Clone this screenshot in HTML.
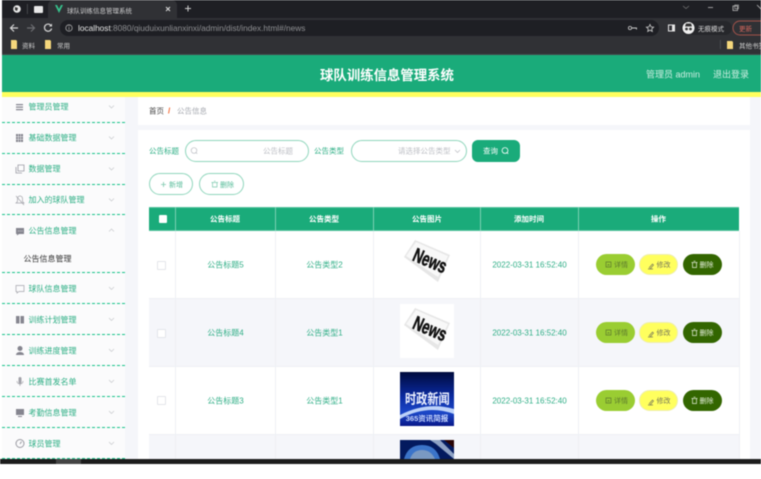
<!DOCTYPE html>
<html lang="zh"><head><meta charset="utf-8"><title>球队训练信息管理系统</title>
<style>
*{box-sizing:border-box;margin:0;padding:0}
html,body{width:761px;height:479px;overflow:hidden;background:#fff}
body{font-family:"Liberation Sans","Noto Sans CJK SC",sans-serif;position:relative}
#w{position:absolute;left:0;top:0;width:761px;height:479px;overflow:hidden;filter:blur(.45px)}
.a{position:absolute;white-space:nowrap}
.c{position:absolute;white-space:nowrap;text-align:center;transform:translate(-50%,-50%)}
.l{position:absolute;white-space:nowrap;transform:translateY(-50%)}
.m{font-size:8px;color:#2cae84;left:28.5px}
.dash{position:absolute;left:2px;width:123px;height:0;border-top:1px dashed #17c28a}
.th{font-size:7.5px;color:#fff;font-weight:bold}
.td{font-size:8px;color:#2fae86}
.b{position:absolute;height:21px;width:39px;border-radius:11px;font-size:7px;text-align:center;line-height:23px}
.g{background:#9acd32;color:#5d7a2d}.y{background:#ffff5e;color:#77775a;border:1px solid #eeeeb0;line-height:22px}.d{background:#336600;color:#e6efdc}
.v{position:absolute;background:#eef0f4;width:1px}
.box{position:absolute;left:157px;width:9px;height:9px;border:1px solid #e3e5ea;background:#fff;border-radius:1px}
</style></head><body><div id="w">
<!-- browser chrome -->
<div class="a" style="left:2px;top:0;width:759px;height:18px;background:#1e1f24"></div>
<div class="a" style="left:48px;top:0;width:129px;height:18px;background:#303135;border-radius:5px 5px 0 0"></div>
<div class="a" style="left:2px;top:18px;width:759px;height:37px;background:#303135"></div>
<div class="a" style="left:2px;top:54px;width:759px;height:1px;background:#46474b"></div>
<div class="a" style="left:60px;top:19.5px;height:16px;background:#1e1f24;border-radius:8px;width:599px"></div>
<svg class="a" style="left:0;top:0" width="761" height="55" viewBox="0 0 761 55">
<circle cx="17" cy="9" r="3.8" fill="#e8e8e8"/><path d="M15 7l3 1-1 3-2-1z" fill="#333"/>
<rect x="27" y="4" width=".7" height="10" fill="#55565a"/>
<rect x="34" y="6" width="9" height="7" rx="1" fill="#e8e8e8"/>
<path d="M55 5l4 8 4-8h-2l-2 4-2-4z" fill="#37c18c"/>
<path d="M166 7l4 4M170 7l-4 4" stroke="#ddd" stroke-width="1"/>
<path d="M188 5.500v6M185 8.500h6" stroke="#ccc" stroke-width="1"/>
<path d="M18 28h-7M14 24.500l-3.500 3.500 3.500 3.500" stroke="#d5d5d5" stroke-width="1.200" fill="none"/>
<path d="M27 28h7M31 24.500l3.500 3.500-3.500 3.500" stroke="#6d6e72" stroke-width="1.200" fill="none"/>
<path d="M51 25.500a3.600 3.600 0 1 0 .6 3" stroke="#d5d5d5" stroke-width="1.200" fill="none"/><path d="M52 23.500v3h-3z" fill="#d5d5d5"/>
<circle cx="69" cy="28" r="3.200" stroke="#aaa" stroke-width=".8" fill="none"/><path d="M69 27v3M69 25.800v.6" stroke="#aaa" stroke-width=".7"/>
<path d="M11 40h5l1 1v8h-6z" fill="#f5d77c"/><path d="M45 40h5l1 1v8h-6z" fill="#f5d77c"/><path d="M727 41h5l1 1v7h-6z" fill="#f5d77c"/>
<rect x="720" y="40" width=".7" height="9" fill="#55565a"/>
<circle cx="630" cy="28" r="1.600" stroke="#ccc" fill="none" stroke-width=".8"/><path d="M632 28h4.500v1.500" stroke="#ccc" stroke-width=".9" fill="none"/>
<path d="M650 24.500l1.100 2.400 2.500.3-1.900 1.700.6 2.500-2.300-1.300-2.300 1.300.6-2.500-1.900-1.700 2.500-.3z" stroke="#ccc" stroke-width=".8" fill="none"/>
<rect x="668" y="24.500" width="7" height="7" fill="#e5e5e5"/><rect x="669" y="25.500" width="3" height="5" fill="#303135"/>
<path d="M683 6l3 2.500 3-2.500" stroke="#777" stroke-width=".7" fill="none"/>
<path d="M708 7.500h5" stroke="#bbb" stroke-width=".8"/>
<rect x="733" y="6" width="4.500" height="4.500" stroke="#bbb" stroke-width=".8" fill="none"/><rect x="734.800" y="5" width="3.700" height="3.700" stroke="#bbb" stroke-width=".6" fill="none"/>
<path d="M757 5l4 4" stroke="#bbb" stroke-width=".8"/>
<rect x="681" y="21" width="51" height="14" rx="7" fill="#26272b"/>
<circle cx="688.500" cy="28" r="6" fill="#f0f0f0"/><circle cx="686.500" cy="29" r="1.400" fill="#333"/><circle cx="690.500" cy="29" r="1.400" fill="#333"/><path d="M685 26.500h7l-1-3h-5z" fill="#333"/>
<rect x="733" y="21" width="40" height="14" rx="7" fill="none" stroke="#a3524a"/>
</svg>
<div class="l" style="left:67px;top:9.500px;font-size:6.500px;color:#cfcfd0">球队训练信息管理系统</div>
<div class="l" style="left:78px;top:28px;font-size:8.300px;color:#8e8f92"><span style="color:#e6e6e6">localhost</span>:8080/qiuduixunlianxinxi/admin/dist/index.html#/news</div>
<div class="l" style="left:22px;top:45px;font-size:6.500px;color:#cfcfcf">资料</div>
<div class="l" style="left:57px;top:45px;font-size:6.500px;color:#cfcfcf">常用</div>
<div class="l" style="left:698px;top:28px;font-size:6.500px;color:#d8d8d8">无痕模式</div>
<div class="l" style="left:739px;top:28px;font-size:6.500px;color:#d9695e">更新</div>
<div class="l" style="left:739px;top:45px;font-size:6.500px;color:#cfcfcf">其他书签</div>

<!-- header -->
<div class="a" style="left:2px;top:55px;width:759px;height:37px;background:#1aab7a"></div>
<div class="a" style="left:2px;top:92px;width:759px;height:5px;background:#ffff5e"></div>
<div class="c" style="left:387px;top:74px;font-size:13.400px;font-weight:bold;color:#fff">球队训练信息管理系统</div>
<div class="l" style="left:646px;top:74px;font-size:9px;color:#cdeee2">管理员 admin</div>
<div class="l" style="left:713px;top:74px;font-size:9px;color:#cdeee2">退出登录</div>

<!-- backgrounds -->
<div class="a" style="left:2px;top:97px;width:759px;height:362px;background:#f5f6fa"></div>
<div class="a" style="left:2px;top:97px;width:123px;height:362px;background:#fbfbfc"></div>
<div class="a" style="left:138px;top:97px;width:612px;height:28px;background:#fff"></div>
<div class="a" style="left:138px;top:130px;width:612px;height:329px;background:#fff"></div>

<!-- sidebar -->
<div class="l m" style="top:107px">管理员管理</div>
<div class="l m" style="top:138px">基础数据管理</div>
<div class="l m" style="top:169px">数据管理</div>
<div class="l m" style="top:200px">加入的球队管理</div>
<div class="l m" style="top:231px">公告信息管理</div>
<div class="l" style="left:23.500px;top:258.500px;font-size:8px;color:#333">公告信息管理</div>
<div class="l m" style="top:289px">球队信息管理</div>
<div class="l m" style="top:320px">训练计划管理</div>
<div class="l m" style="top:351px">训练进度管理</div>
<div class="l m" style="top:382px">比赛首发名单</div>
<div class="l m" style="top:413px">考勤信息管理</div>
<div class="l m" style="top:443.500px">球员管理</div>
<div class="dash" style="top:122px"></div><div class="dash" style="top:153px"></div><div class="dash" style="top:184px"></div><div class="dash" style="top:214px"></div><div class="dash" style="top:272px"></div><div class="dash" style="top:303px"></div><div class="dash" style="top:334px"></div><div class="dash" style="top:365px"></div><div class="dash" style="top:396px"></div><div class="dash" style="top:427px"></div><div class="dash" style="top:458px"></div>
<svg class="a" style="left:0;top:97px" width="125" height="362" viewBox="0 97 125 362" fill="#85858f">
<path d="M16 104h7v1.200h-7zM16 106.500h7v1.200h-7zM16 109h7v1.200h-7z"/>
<path d="M16 134h7v8h-7z"/><path d="M18.300 134v8M20.700 134v8M16 136.700h7M16 139.300h7" stroke="#fbfbfc" stroke-width=".5"/>
<path d="M18 165h6v6h-6z M16 167v6h6" fill="none" stroke="#9a9aa2" stroke-width=".8"/>
<path d="M16 203h8l-1.500-1.500v-3a2.500 2.500 0 0 0-5 0v3z M16 196l8 9" fill="none" stroke="#a3a3aa" stroke-width=".7"/>
<path d="M16 228h8v6h-5l-2 1.500v-1.500h-1z"/><path d="M18 231h.8M19.800 231h.8M21.600 231h.8" stroke="#fbfbfc" stroke-width=".8"/>
<path d="M16 285.500h8v6h-5l-2 1.500v-1.500h-1z" fill="none" stroke="#a3a3aa" stroke-width=".7"/>
<path d="M16 316h3.500v7.500h-3.500zM20.500 316h3.500v7.500h-3.500z"/>
<circle cx="20" cy="348.500" r="2.500"/><path d="M16 355c0-4 8-4 8 0z"/>
<rect x="18.500" y="377" width="3" height="7" rx="1.500" fill="#a3a3aa"/><path d="M17 381c0 4 6 4 6 0M20 384v2" fill="none" stroke="#a3a3aa" stroke-width=".7"/>
<path d="M16 409h8v6h-8z"/><path d="M18 416.500h4" stroke="#85858f"/>
<circle cx="20" cy="443.500" r="4" fill="none" stroke="#9a9aa2"/><path d="M20 444l1.500-2.500" stroke="#9a9aa2"/>
<g fill="none" stroke="#c6c8cc" stroke-width=".7">
<path d="M109 105.500l2.500 2.500 2.500-2.500M109 136.500l2.500 2.500 2.500-2.500M109 167.500l2.500 2.500 2.500-2.500M109 198.500l2.500 2.500 2.500-2.500M109 231.500l2.500-2.500 2.500 2.500M109 287l2.500 2.500 2.500-2.500M109 318l2.500 2.500 2.500-2.500M109 349l2.500 2.500 2.500-2.500M109 380l2.500 2.500 2.500-2.500M109 411l2.500 2.500 2.500-2.500M109 442l2.500 2.500 2.500-2.500"/></g>
</svg>

<!-- breadcrumb -->
<div class="l" style="left:149px;top:111px;font-size:7.500px;color:#444">首页</div>
<div class="l" style="left:168px;top:111px;font-size:8px;color:#f4622a;font-weight:bold">/</div>
<div class="l" style="left:177px;top:111px;font-size:7.500px;color:#a6a9b0">公告信息</div>

<!-- search -->
<div class="l" style="left:149px;top:151px;font-size:7.500px;color:#2cae84">公告标题</div>
<div class="a" style="left:185px;top:140px;width:124px;height:22px;border:1px solid #8fd6bc;border-radius:11px;background:#fff"></div>
<div class="l" style="left:263px;top:151px;font-size:7.500px;color:#bcbec4">公告标题</div>
<div class="l" style="left:314px;top:151px;font-size:7.500px;color:#2cae84">公告类型</div>
<div class="a" style="left:351px;top:140px;width:116px;height:22px;border:1px solid #8fd6bc;border-radius:11px;background:#fff"></div>
<div class="l" style="left:398px;top:151px;font-size:7.500px;color:#bcbec4">请选择公告类型</div>
<div class="a" style="left:472px;top:140px;width:48px;height:22px;background:#1aab7a;border-radius:6px"></div>
<div class="l" style="left:483px;top:151px;font-size:7.500px;color:#fff">查询</div>
<div class="a" style="left:149px;top:173px;width:44px;height:22px;border:1px solid #8fd6bc;border-radius:11px;background:#fff"></div>
<div class="l" style="left:169px;top:184.500px;font-size:7px;color:#55bb98">新增</div>
<div class="a" style="left:199px;top:173px;width:45px;height:22px;border:1px solid #8fd6bc;border-radius:11px;background:#fff"></div>
<div class="l" style="left:220px;top:184.500px;font-size:7px;color:#55bb98">删除</div>
<svg class="a" style="left:0;top:130px" width="761" height="70" viewBox="0 130 761 70" fill="none">
<circle cx="194" cy="150.500" r="2.800" stroke="#b9bbc1" stroke-width=".7"/><path d="M196 152.500l1.200 1.200" stroke="#b9bbc1" stroke-width=".7"/>
<path d="M455 150l2.500 2.500 2.500-2.500" stroke="#b9bbc1" stroke-width=".7"/>
<circle cx="505" cy="150.500" r="2.900" stroke="#fff" stroke-width=".8"/><path d="M507 152.600l1.200 1.200" stroke="#fff" stroke-width=".8"/>
<path d="M161 184.500h5M163.500 182v5" stroke="#7cc9ad" stroke-width=".8"/>
<path d="M212.500 182.500h4.500v4.500h-4.500zM211.500 182.500h6.500M214 181.200h1.500" stroke="#7cc9ad" stroke-width=".7"/>
</svg>

<!-- table -->
<div class="a" style="left:149px;top:207px;width:590px;height:24px;background:#1aab7a;border-top:1px solid #56c29e;border-bottom:1px solid #56c29e"></div>
<div class="a" style="left:149px;top:231px;width:590px;height:67px;background:#fff"></div>
<div class="a" style="left:149px;top:298px;width:590px;height:68px;background:#f5f6fa"></div>
<div class="a" style="left:149px;top:366px;width:590px;height:68px;background:#fff"></div>
<div class="a" style="left:149px;top:434px;width:590px;height:25px;background:#f5f6fa"></div>
<div class="a" style="left:149px;top:298px;width:590px;height:1px;background:#eef0f4"></div>
<div class="a" style="left:149px;top:366px;width:590px;height:1px;background:#eef0f4"></div>
<div class="a" style="left:149px;top:434px;width:590px;height:1px;background:#eef0f4"></div>
<div class="v" style="left:175px;top:231px;height:228px"></div>
<div class="v" style="left:275px;top:231px;height:228px"></div>
<div class="v" style="left:373px;top:231px;height:228px"></div>
<div class="v" style="left:480px;top:231px;height:228px"></div>
<div class="v" style="left:578px;top:231px;height:228px"></div>
<div class="v" style="left:739px;top:231px;height:228px"></div>
<div class="v" style="left:175px;top:207px;height:24px;background:#7bd0b3"></div>
<div class="v" style="left:275px;top:207px;height:24px;background:#7bd0b3"></div>
<div class="v" style="left:373px;top:207px;height:24px;background:#7bd0b3"></div>
<div class="v" style="left:480px;top:207px;height:24px;background:#7bd0b3"></div>
<div class="v" style="left:578px;top:207px;height:24px;background:#7bd0b3"></div>
<div class="a" style="left:159px;top:215px;width:8px;height:8px;background:#fff;border-radius:1px"></div>
<div class="c th" style="left:225px;top:219px">公告标题</div>
<div class="c th" style="left:324px;top:219px">公告类型</div>
<div class="c th" style="left:427px;top:219px">公告图片</div>
<div class="c th" style="left:529px;top:219px">添加时间</div>
<div class="c th" style="left:658.500px;top:219px">操作</div>

<div class="box" style="top:261px"></div>
<div class="box" style="top:329px"></div>
<div class="box" style="top:396px"></div>
<div class="c td" style="left:225.500px;top:265px">公告标题5</div>
<div class="c td" style="left:324.500px;top:265px">公告类型2</div>
<div class="c td" style="left:529.500px;top:265px">2022-03-31 16:52:40</div>
<div class="c td" style="left:225.500px;top:333px">公告标题4</div>
<div class="c td" style="left:324.500px;top:333px">公告类型1</div>
<div class="c td" style="left:529.500px;top:333px">2022-03-31 16:52:40</div>
<div class="c td" style="left:225.500px;top:401px">公告标题3</div>
<div class="c td" style="left:324.500px;top:401px">公告类型1</div>
<div class="c td" style="left:529.500px;top:401px">2022-03-31 16:52:40</div>

<!-- images -->
<svg class="a" style="left:400px;top:236px" width="54" height="54" viewBox="0 0 54 54">
<path d="M4 21L15 4 50 19 38 46z" fill="#e6e6e6"/><path d="M6 20L16 6 48 20 38 41z" fill="#f8f8f8"/>
<text transform="translate(11.500 24) rotate(23) scale(.78 1.15)" font-family="Liberation Sans" font-weight="bold" font-size="17" fill="#111" stroke="#111" stroke-width=".5">News</text></svg>
<svg class="a" style="left:400px;top:304px;background:#fff" width="54" height="54" viewBox="0 0 54 54">
<path d="M4 21L15 4 50 19 38 46z" fill="#e6e6e6"/><path d="M6 20L16 6 48 20 38 41z" fill="#f8f8f8"/>
<text transform="translate(11.500 24) rotate(23) scale(.78 1.15)" font-family="Liberation Sans" font-weight="bold" font-size="17" fill="#111" stroke="#111" stroke-width=".5">News</text></svg>
<svg class="a" style="left:400px;top:372px" width="54" height="54" viewBox="0 0 54 54">
<defs><linearGradient id="g1" x1="0" y1="0" x2="0" y2="1"><stop offset="0" stop-color="#000a3c"/><stop offset=".45" stop-color="#0a2aa0"/><stop offset=".75" stop-color="#1c48c8"/><stop offset="1" stop-color="#08188a"/></linearGradient></defs>
<rect width="54" height="54" fill="url(#g1)"/><path d="M0 47Q27 32 54 42V37Q27 29 0 43z" fill="#cfe2ff" opacity=".9"/>
<text transform="translate(5 32) scale(1 1.25)" font-family="Liberation Sans,Noto Sans CJK SC,sans-serif" font-weight="bold" font-size="11.200" fill="#eef2ff">时政新闻</text>
<text x="27" y="49" text-anchor="middle" font-family="Liberation Sans,Noto Sans CJK SC,sans-serif" font-size="7.500" font-weight="bold" fill="#c9d8ff">365资讯简报</text></svg>
<svg class="a" style="left:400px;top:440px" width="54" height="19" viewBox="0 0 54 19">
<rect width="54" height="19" fill="#031a5e"/><path d="M30 0h10l14 14v5L36 4z" fill="#8ea2c4"/><path d="M44 0h10v8z" fill="#2a0505"/><path d="M4 19Q8 5 22 5t18 14z" fill="#3b74c9"/><path d="M10 19Q13 10 22 10t13 9z" fill="#7a99c2"/></svg>

<!-- action buttons -->
<div class="b g" style="left:596px;top:254px"><span style="margin-left:11px">详情</span></div>
<div class="b y" style="left:639px;top:254px"><span style="margin-left:10px">修改</span></div>
<div class="b d" style="left:683px;top:254px"><span style="margin-left:8px">删除</span></div>
<div class="b g" style="left:596px;top:322px"><span style="margin-left:11px">详情</span></div>
<div class="b y" style="left:639px;top:322px"><span style="margin-left:10px">修改</span></div>
<div class="b d" style="left:683px;top:322px"><span style="margin-left:8px">删除</span></div>
<div class="b g" style="left:596px;top:390px"><span style="margin-left:11px">详情</span></div>
<div class="b y" style="left:639px;top:390px"><span style="margin-left:10px">修改</span></div>
<div class="b d" style="left:683px;top:390px"><span style="margin-left:8px">删除</span></div>
<svg class="a" style="left:0;top:0" width="761" height="479" viewBox="0 0 761 479" fill="none" stroke-width=".7">
<g><path d="M606 262h5v5h-5zM607.500 265.500l1-1 1 1" stroke="#5d7a2d"/><path d="M649 268l3.500-4 1 1-3.500 4h-2M649 269h4" stroke="#77775a"/><path d="M692.500 262.500h4v5h-4zM691.500 262.500h6M693.500 261.200h2" stroke="#e6efdc"/></g>
<g transform="translate(0 68)"><path d="M606 262h5v5h-5zM607.500 265.500l1-1 1 1" stroke="#5d7a2d"/><path d="M649 268l3.500-4 1 1-3.500 4h-2M649 269h4" stroke="#77775a"/><path d="M692.500 262.500h4v5h-4zM691.500 262.500h6M693.500 261.200h2" stroke="#e6efdc"/></g>
<g transform="translate(0 136)"><path d="M606 262h5v5h-5zM607.500 265.500l1-1 1 1" stroke="#5d7a2d"/><path d="M649 268l3.500-4 1 1-3.500 4h-2M649 269h4" stroke="#77775a"/><path d="M692.500 262.500h4v5h-4zM691.500 262.500h6M693.500 261.200h2" stroke="#e6efdc"/></g>
</svg>

<!-- bottom bar -->
<div class="a" style="left:0;top:459px;width:761px;height:5px;background:#1c1c1c"></div>
<div class="a" style="left:56px;top:459px;width:25px;height:5px;background:#444"></div>
<div class="a" style="left:0;top:464px;width:761px;height:15px;background:#fff"></div>
</div></body></html>
